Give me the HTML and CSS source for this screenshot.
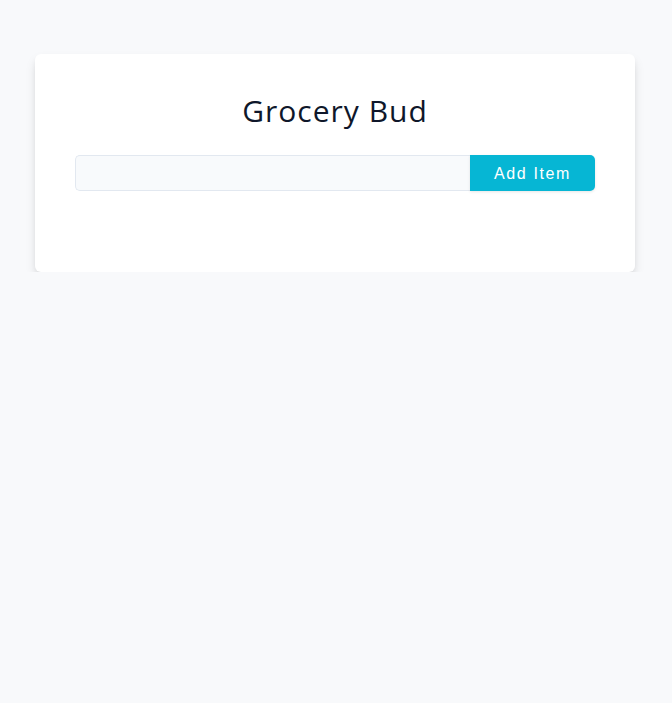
FILE: index.html
```html
<!DOCTYPE html>
<html>
<head>
<meta charset="utf-8">
<link rel="stylesheet" href="styles.css">
</head>
<body>
<main class="page">
  <section class="card">
    <h3 class="title">Grocery Bud</h3>
    <form class="form">
      <input class="input" type="text">
      <button class="btn" type="button">Add Item</button>
    </form>
  </section>
</main>
</body>
</html>
```

FILE: styles.css
```css
* { box-sizing: border-box; }
html, body { margin: 0; padding: 0; }
body {
  background: #f8f9fb;
  font-family: "Open Sans", "Noto Sans", sans-serif;
  color: #0f172a;
}
.page {
  display: flex;
  justify-content: center;
  padding: 54px 2px 0 0;
}
.card {
  width: 600px;
  background: #fff;
  border-radius: 6px;
  box-shadow: 0 6px 12px -2px rgba(0,0,0,0.15), 0 3px 7px -3px rgba(0,0,0,0.1);
  padding: 36px 40px 81px;
}
.title {
  margin: 0 0 23px;
  text-align: center;
  font-weight: 400;
  font-size: 30px;
  line-height: 42px;
  letter-spacing: 1px;
  color: #0f172a;
}
.form {
  display: flex;
  height: 36px;
}
.input {
  flex: 1;
  min-width: 0;
  height: 36px;
  margin: 0;
  background: #f8fafc;
  border: 1px solid #e2e8f0;
  border-right: none;
  border-radius: 5px 0 0 5px;
  outline: none;
}
.btn {
  width: 125px;
  height: 36px;
  margin: 0;
  padding: 1px 0 0;
  border: none;
  background: #06b6d4;
  color: #fff;
  font-family: "Liberation Sans", Arial, sans-serif;
  font-size: 16px;
  letter-spacing: 1.6px;
  border-radius: 0 5px 5px 0;
  box-shadow: 0 1px 3px rgba(0,0,0,0.1);
}
```
